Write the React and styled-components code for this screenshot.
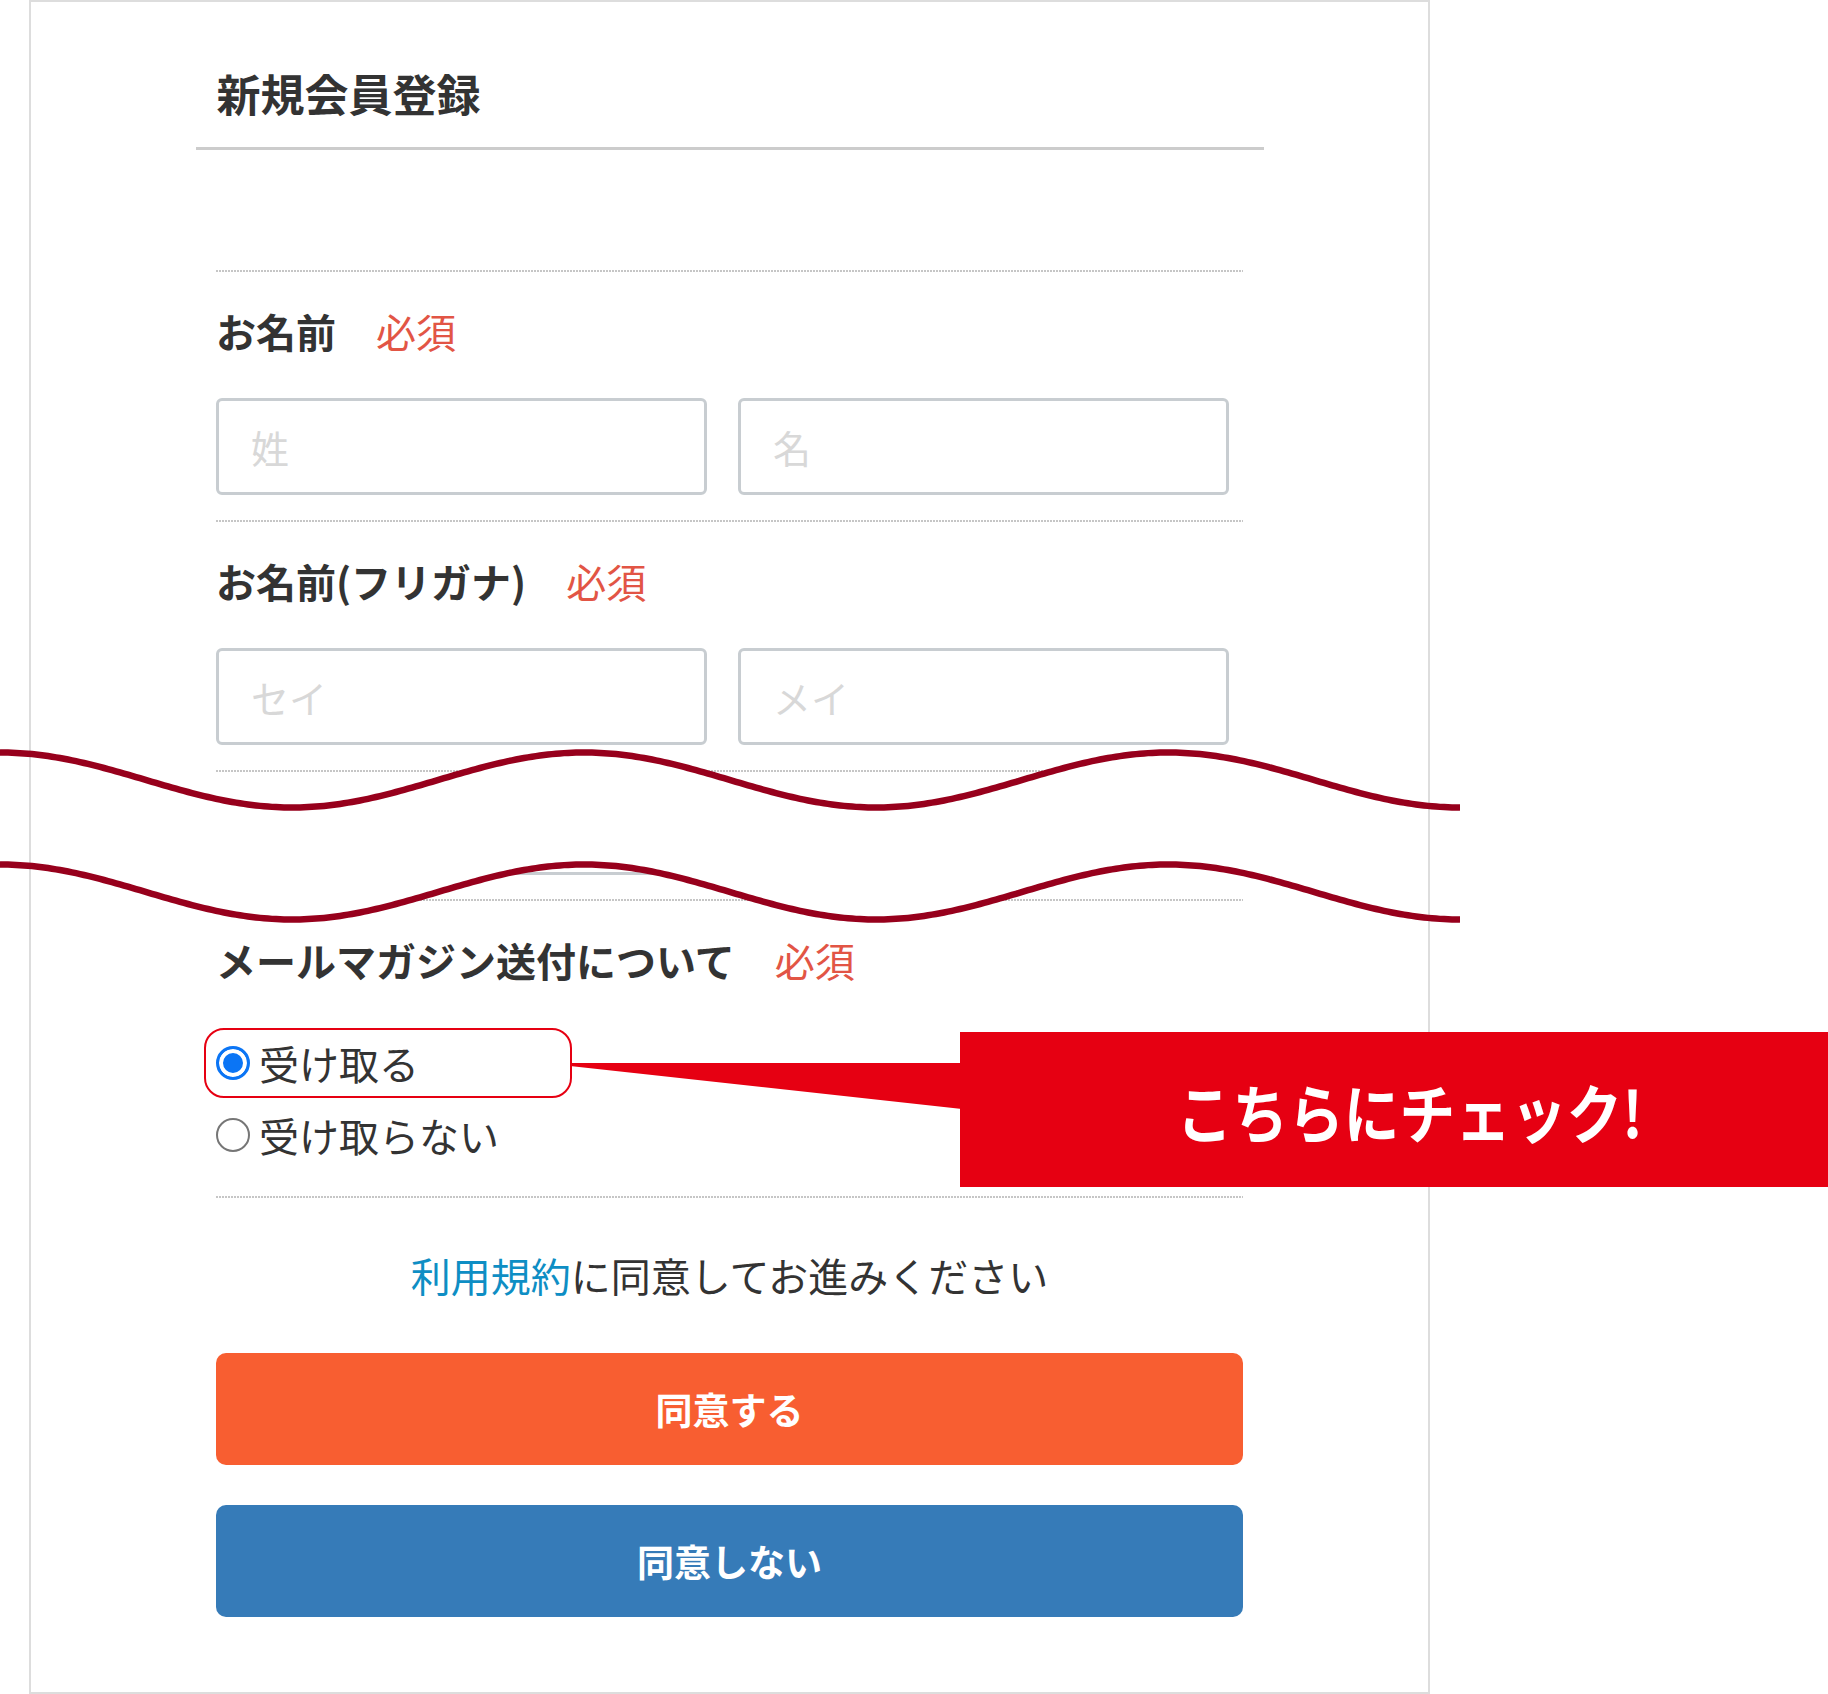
import React from 'react';
import styled, { createGlobalStyle } from 'styled-components';

const GlobalStyle = createGlobalStyle`
  * { box-sizing: border-box; }
  html, body { margin: 0; padding: 0; background: #ffffff; }
  body {
    font-family: "Noto Sans CJK JP", "Noto Sans", sans-serif;
    color: #333333;
  }
`;

const Page = styled.div`
  position: relative;
  width: 1828px;
  height: 1694px;
  overflow: hidden;
  background: #ffffff;
`;

const Card = styled.main`
  margin-left: 29px;
  width: 1401px;
  height: 1694px;
  border: 2px solid #dddddd;
  display: flex;
  flex-direction: column;
  align-items: center;
`;

const Header = styled.header`
  width: 1068px;
  padding: 65px 0 28px 21px;
  border-bottom: 3px solid #cccccc;
  margin-bottom: 120px;
`;

const Title = styled.h1`
  margin: 0;
  font-size: 44px;
  line-height: 52px;
  font-weight: 700;
  color: #333333;
`;

const Form = styled.form`
  width: 1027px;
  display: flex;
  flex-direction: column;
`;

const Separator = styled.div`
  height: 2px;
  background: repeating-linear-gradient(to right, #c6c6c6 0 2px, transparent 2px 3px);
`;

const Field = styled.section`
  padding: 34px 0 25px;
`;

const LabelRow = styled.div`
  display: flex;
  align-items: baseline;
  font-size: 40px;
  line-height: 50px;
  font-weight: 700;
  color: #333333;
  margin-bottom: 42px;
`;

const Required = styled.span`
  margin-left: 40px;
  font-weight: 400;
  color: #e25545;
`;

const InputRow = styled.div`
  display: grid;
  grid-template-columns: 491px 491px;
  column-gap: 31px;
`;

const TextInput = styled.input`
  height: 97px;
  width: 100%;
  border: 3px solid #c8cdd1;
  border-radius: 6px;
  padding: 0 32px;
  font: inherit;
  font-size: 38px;
  color: #333333;
  background: #ffffff;
  outline: none;
  &::placeholder {
    color: #d8d8d8;
  }
`;

const CutSection = styled.section`
  height: 127px;
  padding-top: 3px;
`;

const CutBox = styled.div`
  width: 491px;
  height: 100px;
  border-bottom: 3px solid #c8cdd1;
  border-radius: 0 0 6px 6px;
`;

const RadioList = styled.div`
  display: flex;
  flex-direction: column;
`;

const RadioRow = styled.label`
  position: relative;
  height: 72px;
  display: flex;
  align-items: center;
  font-size: 40px;
  font-weight: 400;
  color: #333333;
`;

const Radio = styled.input`
  appearance: none;
  -webkit-appearance: none;
  width: 34px;
  height: 34px;
  margin: 0 9px 0 0;
  border-radius: 50%;
  border: 2.5px solid #767676;
  background: #ffffff;
  flex: none;
  &:checked {
    border: 3px solid #0b75f5;
    background: #0b75f5;
    box-shadow: inset 0 0 0 4px #ffffff;
  }
`;

const Highlight = styled.span`
  position: absolute;
  top: 1px;
  left: -12px;
  width: 368px;
  height: 70px;
  border: 2.5px solid #e60012;
  border-radius: 20px;
  pointer-events: none;
`;

const Terms = styled.section`
  padding-top: 52px;
`;

const TermsText = styled.p`
  margin: 0 0 53px;
  text-align: center;
  font-size: 40px;
  line-height: 50px;
  color: #333333;
`;

const TermsLink = styled.a`
  color: #0e8ec4;
  text-decoration: none;
`;

const ButtonStack = styled.div`
  display: flex;
  flex-direction: column;
  gap: 40px;
`;

const ActionButton = styled.button`
  height: 112px;
  width: 100%;
  border: none;
  border-radius: 10px;
  background: ${(p) => p.$bg};
  color: #ffffff;
  font-family: inherit;
  font-size: 37px;
  font-weight: 700;
  cursor: pointer;
`;

const WaveArt = styled.svg`
  position: absolute;
  left: 0;
  top: 700px;
  width: 1460px;
  height: 260px;
  pointer-events: none;
`;

const PointerArt = styled.svg`
  position: absolute;
  left: 560px;
  top: 1050px;
  width: 410px;
  height: 70px;
  pointer-events: none;
`;

const Callout = styled.div`
  position: absolute;
  left: 960px;
  top: 1032px;
  width: 868px;
  height: 155px;
  background: #e60012;
  display: flex;
  align-items: center;
  justify-content: center;
  padding-left: 32px;
`;

const CalloutText = styled.span`
  display: inline-block;
  color: #ffffff;
  font-size: 64px;
  font-weight: 700;
  line-height: 1;
  white-space: nowrap;
  transform: scaleX(0.87);
`;

const PERIOD = 584;
const AMP = 27.5;

const wavePoints = (center, x0, x1) => {
  const pts = [];
  for (let x = x0; x < x1; x += 4) {
    pts.push([x, center - AMP * Math.cos((2 * Math.PI * x) / PERIOD)]);
  }
  pts.push([x1, center - AMP * Math.cos((2 * Math.PI * x1) / PERIOD)]);
  return pts;
};

const toPath = (pts) =>
  pts.map(([x, y], i) => `${i ? 'L' : 'M'}${x.toFixed(1)} ${y.toFixed(2)}`).join(' ');

const WaveCut = () => {
  const top = wavePoints(780, 0, 1460);
  const bottom = wavePoints(892, 0, 1460);
  const bandTop = wavePoints(780, 31, 1428);
  const bandBottom = wavePoints(892, 31, 1428).reverse();
  const band =
    toPath(bandTop) +
    ' ' +
    bandBottom.map(([x, y]) => `L${x.toFixed(1)} ${y.toFixed(2)}`).join(' ') +
    ' Z';
  return (
    <WaveArt viewBox="0 700 1460 260" aria-hidden="true">
      <path d={band} fill="#ffffff" />
      <path d={toPath(top)} fill="none" stroke="#97001c" strokeWidth="6.5" />
      <path d={toPath(bottom)} fill="none" stroke="#97001c" strokeWidth="6.5" />
    </WaveArt>
  );
};

export default function App() {
  return (
    <Page>
      <GlobalStyle />
      <Card>
        <Header>
          <Title>新規会員登録</Title>
        </Header>
        <Form onSubmit={(e) => e.preventDefault()}>
          <Separator />
          <Field>
            <LabelRow>
              お名前<Required>必須</Required>
            </LabelRow>
            <InputRow>
              <TextInput placeholder="姓" />
              <TextInput placeholder="名" />
            </InputRow>
          </Field>
          <Separator />
          <Field>
            <LabelRow>
              お名前(フリガナ)<Required>必須</Required>
            </LabelRow>
            <InputRow>
              <TextInput placeholder="セイ" />
              <TextInput placeholder="メイ" />
            </InputRow>
          </Field>
          <Separator />
          <CutSection aria-hidden="true">
            <CutBox />
          </CutSection>
          <Separator />
          <Field>
            <LabelRow>
              メールマガジン送付について<Required>必須</Required>
            </LabelRow>
            <RadioList>
              <RadioRow>
                <Radio type="radio" name="mailmag" defaultChecked />
                受け取る
                <Highlight />
              </RadioRow>
              <RadioRow>
                <Radio type="radio" name="mailmag" />
                受け取らない
              </RadioRow>
            </RadioList>
          </Field>
          <Separator />
          <Terms>
            <TermsText>
              <TermsLink href="#">利用規約</TermsLink>に同意してお進みください
            </TermsText>
            <ButtonStack>
              <ActionButton type="button" $bg="#f85e31">同意する</ActionButton>
              <ActionButton type="button" $bg="#367bb8">同意しない</ActionButton>
            </ButtonStack>
          </Terms>
        </Form>
      </Card>
      <WaveCut />
      <PointerArt viewBox="560 1050 410 70" aria-hidden="true">
        <polygon points="570,1063 962,1063 962,1109 570,1066" fill="#e60012" />
      </PointerArt>
      <Callout>
        <CalloutText>こちらにチェック!</CalloutText>
      </Callout>
    </Page>
  );
}
